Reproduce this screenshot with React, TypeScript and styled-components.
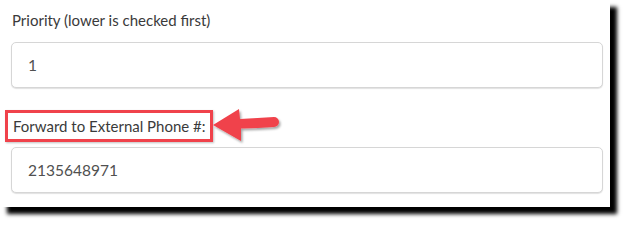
import React from 'react';
import styled, { createGlobalStyle } from 'styled-components';

const GlobalStyle = createGlobalStyle`
  html, body {
    margin: 0;
    padding: 0;
    background: #ffffff;
  }

  body {
    font-family: Lato, 'Liberation Sans', sans-serif;
  }
`;

const Page = styled.div`
  width: 625px;
  height: 222px;
  overflow: hidden;
`;

const Panel = styled.div`
  box-sizing: border-box;
  width: 610px;
  height: 207px;
  padding: 10px 7px 0 11px;
  background: #ffffff;
  box-shadow: 7px 7px 4px #000;
`;

const Field = styled.div<{ gap: number }>`
  display: flex;
  flex-direction: column;
  gap: ${({ gap }) => gap}px;
  margin-bottom: 22px;
`;

const Label = styled.label`
  display: block;
  padding-left: 1px;
  font-size: 15px;
  line-height: 20px;
  color: #3a3a3a;
`;

const Input = styled.input`
  box-sizing: border-box;
  width: 100%;
  height: 46px;
  padding: 0 16px;
  border: 1px solid #d6d6d6;
  border-radius: 5px;
  box-shadow: 0 1px 1px rgb(0 0 0 / 0.12);
  background: #ffffff;
  font-family: Lato, 'Liberation Sans', sans-serif;
  font-size: 15.5px;
  color: #505050;
  outline: none;
`;

const CalloutRow = styled.div`
  display: flex;
  align-items: center;
  height: 32px;
  margin-left: -6px;
`;

const Highlight = styled.div`
  box-sizing: border-box;
  height: 32px;
  padding: 3px 4px 0 4px;
  border: 3px solid #f0424b;
  box-shadow: 1px 1px 2px rgb(0 0 0 / 0.25);
`;

const ArrowIcon = styled.svg`
  flex: none;
  margin: -3px 0 -3px -1px;
`;

const Arrow = () => (
  <ArrowIcon width="72" height="38" viewBox="0 0 72 38">
    <defs>
      <filter id="arrowShadow" x="-20%" y="-20%" width="140%" height="150%">
        <feDropShadow dx="1.5" dy="2" stdDeviation="1.2" floodColor="#000" floodOpacity="0.35" />
      </filter>
    </defs>
    <path
      d="M1 18 L27 2 L28 12 Q46 11 62 10 A5 5 0 0 1 62 20 Q46 21 29 21.5 L29 34 Z"
      fill="#f0424b"
      filter="url(#arrowShadow)"
    />
  </ArrowIcon>
);

const App = () => (
  <Page>
    <GlobalStyle />
    <Panel>
      <Field gap={12}>
        <Label>Priority (lower is checked first)</Label>
        <Input defaultValue="1" />
      </Field>
      <Field gap={5}>
        <CalloutRow>
          <Highlight>
            <Label>Forward to External Phone #:</Label>
          </Highlight>
          <Arrow />
        </CalloutRow>
        <Input defaultValue="2135648971" />
      </Field>
    </Panel>
  </Page>
);

export default App;
